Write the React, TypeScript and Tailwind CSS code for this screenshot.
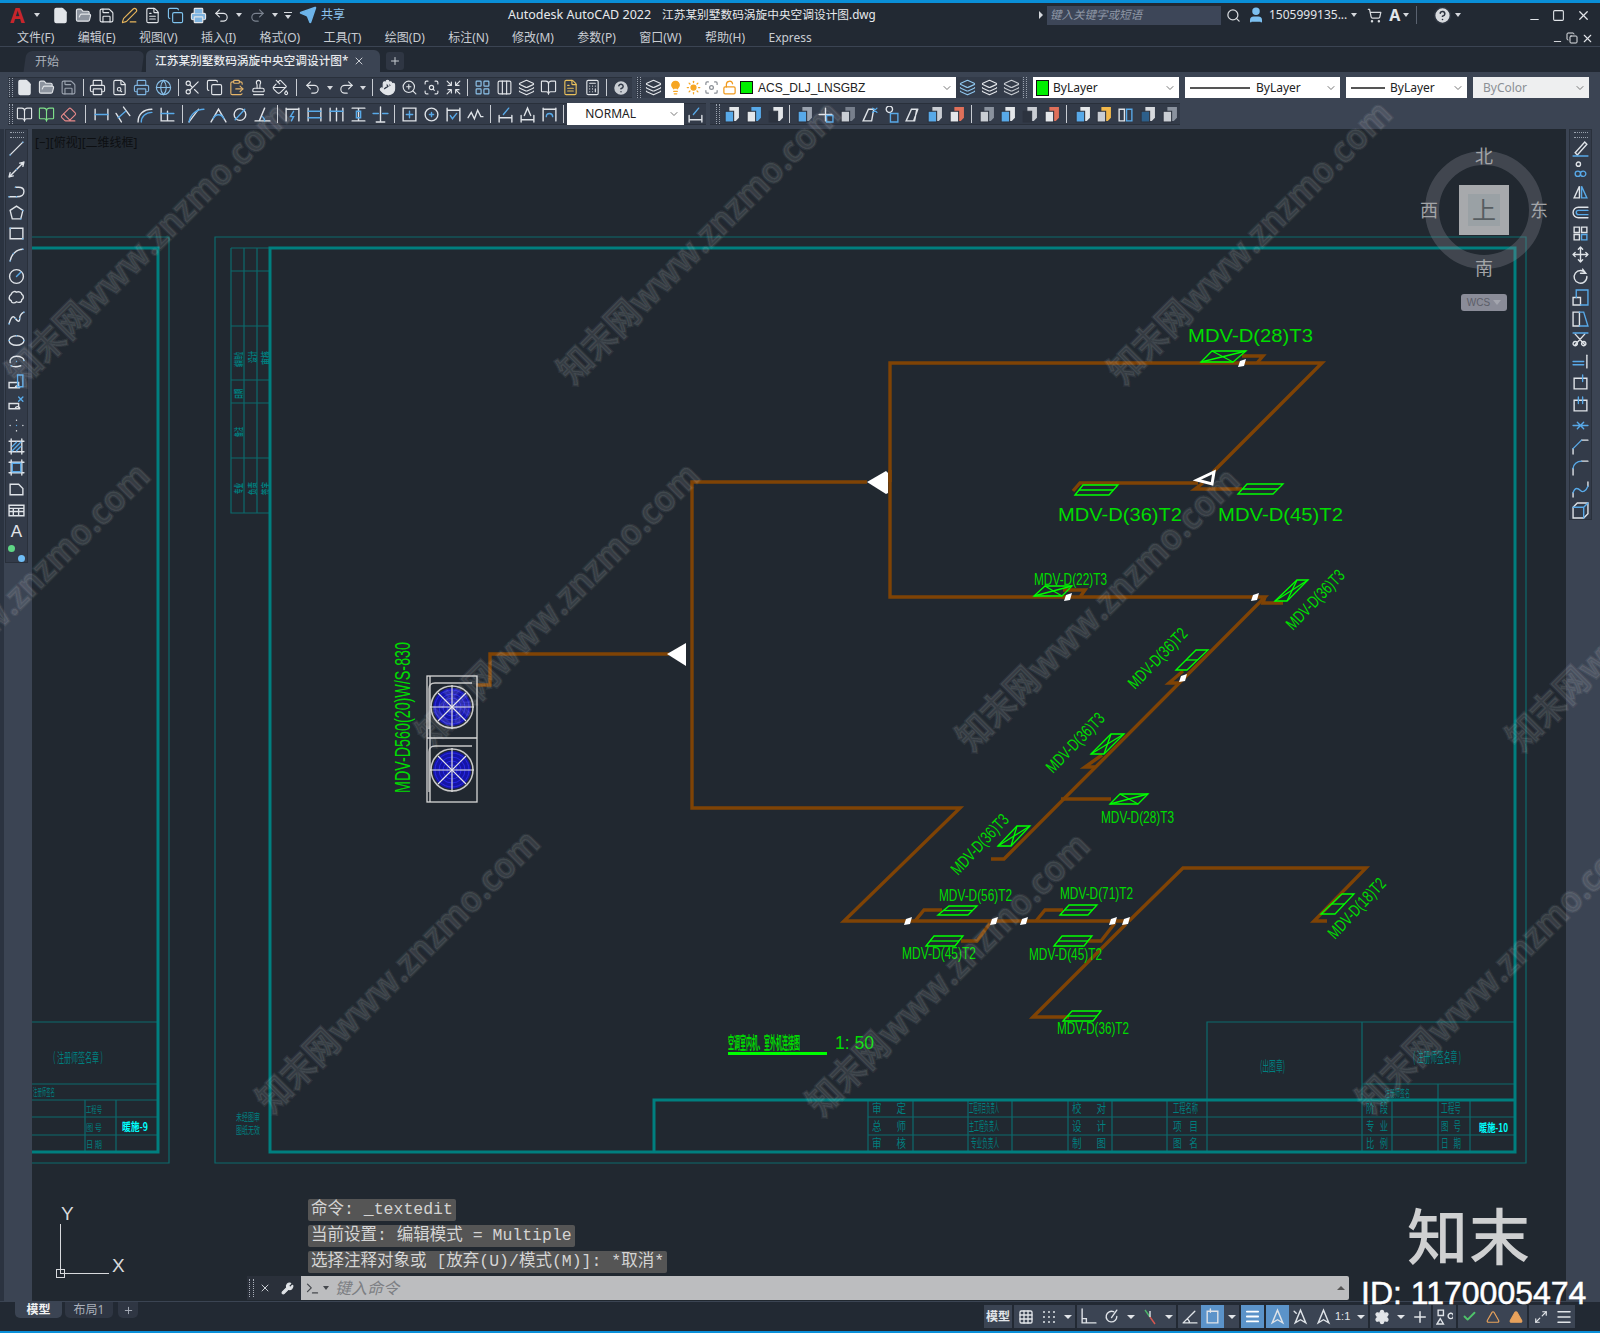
import React from 'react';
import {
  File, FolderOpen, Save, Printer, FileSearch, Globe, Scissors, Copy, ClipboardPaste, Stamp, PaintBucket,
  Undo2, Redo2, Hand, ZoomIn, ScanSearch, Shrink, Calculator, Layers, Columns3, LayoutGrid, PenLine, Lightbulb, Sun,
  Focus, LockOpen, ChevronDown, Search, User, ShoppingCart, Send, X, Minus, Square, Copy as Restore, Wrench, Terminal,
  Grid3x3, Plus, Settings, Maximize2, Menu, Check, Triangle, CircleHelp, BookOpen, Eraser, FileText,
} from 'lucide-react';

const UI = '"Noto Sans", "Noto Sans CJK SC", sans-serif';
const GREEN = '#00dc00';
const TEAL = '#007f7f';
const TEAL2 = '#0c6a6d';
const PIPE = '#7f4305';

const Caret = () => <div className="w-[12px] flex justify-center"><div className="w-0 h-0 border-x-[3px] border-x-transparent border-t-[4px] border-t-[#d5d8dd]" /></div>;
const Sep = ({ w }: { w: number }) => (
  <div className="flex justify-center h-full py-[1px]" style={{ width: w }}><div className="w-px h-full bg-[#c8ccd2]" /></div>
);
const Grip = () => <div className="w-[4px] h-full mx-[1px] border-x border-dotted border-[#9aa2ae]" />;

// small stroked toolbar glyph, white part and blue part
const Glyph = ({ d, b, size = 17 }: { d: string; b?: string; size?: number }) => (
  <svg width={size} height={size} viewBox="0 0 16 16" fill="none" strokeWidth="1.3" strokeLinecap="round">
    <path d={d} stroke="#dfe3e8" />
    {b && <path d={b} stroke="#58a9e8" />}
  </svg>
);

const Cube = ({ a = '#58a9e8', c = '#e4e7ea' }: { a?: string; c?: string }) => (
  <svg width="17" height="17" viewBox="0 0 16 16">
    <path d="M6 1h9v10l-3 3H6z" fill={c} />
    <path d="M2 5h8v10H2z" fill={a} stroke="#2c333f" />
  </svg>
);

const L = ({ I, c = '#e2e5e9', f }: { I: React.ElementType; c?: string; f?: string }) => (
  <I size={17} color={c} fill={f || 'none'} strokeWidth={1.6} />
);

const TI = ({ children }: { children: React.ReactNode }) => (
  <div className="w-[22px] h-full flex items-center justify-center">{children}</div>
);

const Drop = ({ w, children, muted }: { w: number; children?: React.ReactNode; muted?: boolean }) => (
  <div className={`h-[21px] flex items-center pr-[3px] ${muted ? 'bg-[#eeeff0] text-[#8b8f95]' : 'bg-white text-[#222]'}`} style={{ width: w }}>
    <div className="flex-1 flex items-center min-w-0">{children}</div>
    <ChevronDown size={12} color="#777" />
  </div>
);

const menus = ['文件(F)', '编辑(E)', '视图(V)', '插入(I)', '格式(O)', '工具(T)', '绘图(D)', '标注(N)', '修改(M)', '参数(P)', '窗口(W)', '帮助(H)', 'Express'];

const TitleBar = () => (
  <div className="h-[27px] flex items-center pb-[3px] relative text-[#e2e5e9] text-[12px]">
    <div className="w-[508px] flex items-center shrink-0">
      <span className="w-[31px] pl-[10px] text-[21px] leading-none font-bold text-[#c8252b]">A</span>
      <Caret />
      <div className="w-[6px]" />
      <div className="flex items-center gap-[1px]">
        <TI><L I={File} f="#e2e5e9" /></TI>
        <TI><L I={FolderOpen} f="#8d949f" /></TI>
        <TI><L I={Save} /></TI>
        <TI><L I={PenLine} c="#e8b65c" /></TI>
        <TI><L I={FileText} /></TI>
        <TI><L I={Copy} c="#7fc4ef" /></TI>
        <TI><L I={Printer} f="#7fb4e0" /></TI>
        <TI><L I={Undo2} /></TI>
        <Caret />
        <TI><L I={Redo2} c="#7b8390" /></TI>
        <Caret />
        <div className="w-[12px] flex flex-col items-center gap-[2px]"><div className="w-[8px] h-[1px] bg-[#d5d8dd]" /><Caret /></div>
        <div className="w-[3px]" />
        <Send size={18} color="#6db4ea" fill="#6db4ea" />
        <span className="ml-[3px] text-[12px] text-[#8cc3ee]">共享</span>
      </div>
    </div>
    <span className="text-[12.5px] w-[154px] shrink-0 text-[#e8eaed]">Autodesk AutoCAD 2022</span>
    <span className="text-[11.7px] w-[378px] shrink-0 text-[#e8eaed]">江苏某别墅数码涡旋中央空调设计图.dwg</span>
    <div className="w-0 h-0 border-y-[4px] border-y-transparent border-l-[4px] border-l-[#d5d8dd] mr-[4px] -ml-[1px]" />
    <div className="w-[174px] h-[19px] bg-[#3d4658] flex items-center pl-[3px] text-[11.5px] italic text-[#8e97a6]">键入关键字或短语</div>
    <div className="ml-[5px]"><Search size={15} color="#d7dade" /></div>
    <div className="ml-[6px]"><User size={18} color="#7cc0f0" fill="#7cc0f0" /></div>
    <span className="ml-[4px] text-[12px]">1505999135...</span>
    <div className="ml-[1px]"><Caret /></div>
    <div className="ml-[7px]"><ShoppingCart size={15} color="#d7dade" /></div>
    <span className="ml-[7px] text-[16px] leading-none font-bold">A</span>
    <Caret />
    <div className="ml-[4px] w-px h-[18px] bg-[#5a6270]" />
    <div className="ml-[16px]"><CircleHelp size={19} color="#2c333f" fill="#d7dade" /></div>
    <Caret />
    <div className="flex-1" />
    <div className="flex items-center gap-[11px] pr-[9px]">
      <Minus size={13} color="#e2e5e9" className="mt-[8px]" />
      <Square size={13} color="#e2e5e9" />
      <X size={15} color="#e2e5e9" />
    </div>
  </div>
);

const MenuBar = () => (
  <div className="h-[17px] flex items-center pl-[17px] gap-[23.400px] text-[12px] leading-none text-[#c9cdd3] border-b border-[#3b4453] relative">
    {menus.map((m) => <span key={m}>{m}</span>)}
    <div className="flex-1" />
    <div className="flex items-center gap-[3px] pr-[6px]">
      <Minus size={11} color="#e2e5e9" className="mt-[6px]" />
      <Restore size={12} color="#e2e5e9" />
      <X size={13} color="#e2e5e9" />
    </div>
  </div>
);

const TabBar = () => (
  <div className="h-[25px] flex items-end pl-[25px] text-[12px] text-[#aab0ba]">
    <div className="w-[118px] h-[21px] bg-[#2f3643] rounded-t-[6px] flex items-center pl-[10px] -skew-x-[8deg]">
      <span className="skew-x-[8deg]">开始</span>
    </div>
    <div className="ml-[3px] w-[234px] h-[22px] bg-[#3b4453] rounded-t-[6px] flex items-center pl-[9px] text-[#e8eaed]">
      <span className="font-medium text-[11.700px]">江苏某别墅数码涡旋中央空调设计图*</span>
      <X size={12} color="#c9cdd3" className="ml-[5px]" />
    </div>
    <div className="ml-[6px] mb-[2px] w-[18px] h-[18px] bg-[#2f3643] rounded-[3px] flex items-center justify-center"><Plus size={12} color="#c9cdd3" /></div>
  </div>
);

const Row1 = () => (
  <div className="h-[21px] flex items-center pl-[8px] text-[12px] mt-[5px]">
    <div className="h-[21px] flex items-center bg-[#333b49] border-y border-[#29303b] w-[624px] shrink-0">
      <Grip />
      <TI><L I={File} f="#e2e5e9" /></TI><TI><L I={FolderOpen} f="#8d949f" /></TI><TI><L I={Save} c="#9aa2ae" /></TI>
      <Sep w={7} />
      <TI><L I={Printer} /></TI><TI><L I={FileSearch} /></TI><TI><L I={Printer} c="#7fb4e0" /></TI><TI><L I={Globe} c="#88c0ea" /></TI>
      <Sep w={7} />
      <TI><L I={Scissors} /></TI><TI><L I={Copy} /></TI><TI><L I={ClipboardPaste} c="#e5b56a" /></TI><TI><L I={Stamp} /></TI><TI><L I={PaintBucket} /></TI>
      <Sep w={10} />
      <TI><L I={Undo2} /></TI><Caret /><TI><L I={Redo2} /></TI><Caret />
      <Sep w={7} />
      <TI><L I={Hand} f="#e2e5e9" /></TI><TI><L I={ZoomIn} /></TI><TI><L I={ScanSearch} /></TI><TI><L I={Shrink} /></TI>
      <Sep w={7} />
      <TI><L I={LayoutGrid} c="#8fc6ee" /></TI><TI><L I={Columns3} /></TI><TI><L I={Layers} /></TI><TI><L I={BookOpen} /></TI><TI><L I={FileText} c="#e8c05c" /></TI><TI><L I={Calculator} /></TI>
      <Sep w={7} />
      <TI><CircleHelp size={18} color="#333b49" fill="#c9cdd3" /></TI>
    </div>
    <div className="ml-[4px] h-[21px] w-[29px] flex items-center bg-[#333b49] shrink-0"><Grip /><TI><L I={Layers} /></TI></div>
    <Drop w={291}>
      <div className="flex items-center pl-[3px] gap-[3px]">
        <Lightbulb size={15} color="#f6a623" fill="#f6a623" />
        <Sun size={15} color="#f6a623" fill="#f6a623" />
        <Focus size={15} color="#8a8f96" />
        <LockOpen size={15} color="#f09a1e" />
        <div className="w-[13px] h-[13px] bg-[#00f000] border border-[#111]" />
        <span className="ml-[2px] text-[#222]" style={{ fontFamily: '"Liberation Sans", sans-serif' }}>ACS_DLJ_LNSGBZ</span>
      </div>
    </Drop>
    <div className="h-[21px] w-[66px] flex items-center bg-[#333b49] shrink-0">
      <TI><L I={Layers} c="#8fc6ee" /></TI><TI><L I={Layers} /></TI><TI><L I={Layers} c="#c9cdd3" /></TI>
    </div>
    <div className="h-[21px] w-[11px] flex items-center shrink-0"><Grip /></div>
    <Drop w={146}>
      <div className="w-[13px] h-[16px] ml-[3px] bg-[#00f000] border border-[#111]" />
      <span className="ml-[4px]">ByLayer</span>
    </Drop>
    <div className="w-[6px]" />
    <Drop w={155}>
      <div className="w-[60px] h-[2px] ml-[5px] bg-[#555]" />
      <span className="ml-[6px]">ByLayer</span>
    </Drop>
    <div className="w-[6px]" />
    <Drop w={121}>
      <div className="w-[34px] h-[2px] ml-[5px] bg-[#555]" />
      <span className="ml-[5px]">ByLayer</span>
    </Drop>
    <div className="w-[6px]" />
    <Drop w={116} muted><span className="ml-[10px]">ByColor</span></Drop>
  </div>
);

const dims = [
  { d: 'M2 3v10M14 3v10', b: 'M2 8h12' },
  { d: 'M1 7l5 8M8 1l6 8', b: 'M3 11l7-6' },
  { d: 'M1 15c0-7 5-12 13-12', b: 'M4 15c0-5 4-9 10-9' },
  { d: 'M2 2v12h12M8 5v9', b: 'M2 7h12' },
];
const dims2 = [
  { d: 'M1 15L10 3', b: 'M1 15C2 8 8 3 15 3' },
  { d: 'M1 15L8 3l7 12', b: 'M3 12C5 7 11 7 13 12' },
  { d: 'M13 8A5.500 5.500 0 1 1 2 8A5.500 5.500 0 1 1 13 8', b: 'M3 13L12 3' },
  { d: 'M1 14h14M5 14l5-12', b: 'M10 14c0-2-1-3-2-4' },
];
const dims3 = [
  { d: 'M2 2v12M14 2v12M2 3h12', b: 'M9 5L6 10h3l-2 4' },
  { d: 'M2 2v12M14 2v12', b: 'M2 5h12M2 11h12' },
  { d: 'M2 2v12M8 2v12M14 2v12', b: 'M2 5h12' },
  { d: 'M2 2h12M2 14h12M8 2v12', b: 'M6 5h4v6H6z' },
  { d: 'M8 1v14M4 15h8', b: 'M1 7h5M10 7h5' },
];
const dims4 = [
  { d: 'M2 2h12v12H2z', b: 'M5 8h6M8 5v6' },
  { d: 'M14 8A6 6 0 1 1 2 8A6 6 0 1 1 14 8', b: 'M6 8h4M8 6v4' },
  { d: 'M2 2v12M14 2v12M2 4h12', b: 'M5 9l2 3 4-5' },
  { d: 'M1 11l3-5 3 6 3-8 3 6h2', b: '' },
];
const dims5 = [
  { d: 'M2 15V9M14 15V9M2 11h12', b: 'M6 8l5-6' },
  { d: 'M2 15V9M14 15V9M2 13h12M5 9l3-7 3 7', b: '' },
  { d: 'M2 2v12M14 2v12M2 3h12', b: 'M5 10a3 3 0 1 1 6 0' },
];

const Row2 = () => (
  <div className="h-[22px] flex items-center pl-[8px] mt-[5px] text-[12px]">
    <div className="h-[22px] flex items-center bg-[#333b49] border-y border-[#29303b] w-[698px] shrink-0">
      <Grip />
      <TI><L I={BookOpen} /></TI><TI><L I={BookOpen} c="#7fe08a" /></TI><TI><L I={Eraser} c="#e88a8a" /></TI>
      <Sep w={11} />
      {dims.map((g, i) => <TI key={i}><Glyph d={g.d} b={g.b} /></TI>)}
      <Sep w={7} />
      {dims2.map((g, i) => <TI key={i}><Glyph d={g.d} b={g.b} /></TI>)}
      <Sep w={8} />
      {dims3.map((g, i) => <TI key={i}><Glyph d={g.d} b={g.b} /></TI>)}
      <Sep w={7} />
      {dims4.map((g, i) => <TI key={i}><Glyph d={g.d} b={g.b} /></TI>)}
      <Sep w={8} />
      {dims5.map((g, i) => <TI key={i}><Glyph d={g.d} b={g.b} /></TI>)}
      <Sep w={7} />
      <div className="h-[22px] w-[117px] bg-white flex items-center justify-between pl-[18px] pr-[4px] text-[#222]">
        <span>NORMAL</span><ChevronDown size={12} color="#777" />
      </div>
      <TI><Glyph d="M2 15V9M14 15V9M2 13h12" b="M6 8l5-6" /></TI>
    </div>
    <div className="ml-[4px] h-[22px] flex items-center bg-[#333b49] border-y border-[#29303b] w-[470px] shrink-0">
      <div className="w-[5px]" /><Grip />
      <TI><Cube /></TI><TI><Cube a="#e4e7ea" c="#58a9e8" /></TI><TI><Cube a="#2c333f" /></TI>
      <Sep w={7} />
      <TI><Cube a="#58a9e8" c="#9aa2ae" /></TI><TI><Glyph d="M2 8h12M8 2v12" b="M9 9h6v6H9z" /></TI><TI><Cube a="#c9cdd3" c="#777f8c" /></TI><TI><Glyph d="M2 14L7 3h5l-2 11z" b="M11 2l4 4M15 2l-4 4" /></TI>
      <TI><Glyph d="M3 3a3 3 0 1 1 0 .1" b="M7 7h7v8H7z" /></TI><TI><Glyph d="M2 14L7 3h5l-2 11zM9 14l4-11" /></TI><TI><Cube a="#58a9e8" c="#c9cdd3" /></TI><TI><Cube a="#e4e7ea" c="#e0705a" /></TI>
      <Sep w={8} />
      <TI><Cube a="#c9cdd3" c="#8a929e" /></TI><TI><Cube a="#58a9e8" c="#e4e7ea" /></TI><TI><Cube a="#2c333f" c="#c9cdd3" /></TI><TI><Cube a="#e4e7ea" c="#e0705a" /></TI>
      <Sep w={9} />
      <TI><Cube a="#58a9e8" c="#e4e7ea" /></TI><TI><Cube a="#c9cdd3" c="#f2b84b" /></TI><TI><Glyph d="M2 3h5v11H2z" b="M9 3h5v11H9z" /></TI><TI><Cube a="#2d5f8a" c="#d7dade" /></TI><TI><Cube a="#c9cdd3" c="#8a929e" /></TI>
    </div>
  </div>
);

const leftIcons = [
  { d: 'M2 14L14 2', b: 'M2 14v.1M14 2v.1' },
  { d: 'M1 15l14-14M1 15l4-1M1 15l1-4M15 1l-4 1M15 1l-1 4', b: 'M8 8v.1' },
  { d: 'M1 13h7c5 0 7-2 7-5s-2-4-5-4H7', b: 'M1 13v.1M8 13v.1M7 4v.1' },
  { d: 'M8 2l6 4-2 8H4L2 6z', b: 'M14 6v.1M12 14v.1' },
  { d: 'M2 3h12v10H2z', b: 'M14 13v.1M2 3v.1' },
  { d: 'M2 14C3 8 8 3 14 3', b: 'M2 14v.1M14 3v.1M5 7v.1' },
  { d: 'M14.500 8A6.500 6.500 0 1 1 1.500 8A6.500 6.500 0 1 1 14.500 8', b: 'M8 8l4-4' },
  { d: 'M3 5c1-3 4-3 5-2 2-1 5 0 5 2 2 1 2 4 0 5 0 3-3 3-5 2-2 2-5 1-5-1-3-1-2-5 0-6', b: '' },
  { d: 'M1 13C3 6 5 5 7 8s4 4 4 0 2-5 4-6', b: 'M1 13v.1M7 8v.1M11 8v.1M15 2v.1' },
  { d: 'M15 8c0 2.500-3 4.500-7 4.500S1 10.500 1 8s3-4.500 7-4.500S15 5.500 15 8', b: 'M1 8v.1M15 8v.1M8 3.500v.1' },
  { d: 'M2 9c-1-3 2-6 6-6s7 2 7 4M12 12c-3 1-7 1-9 0', b: 'M8 8v.1M15 7v.1M3 12v.1' },
  { d: 'M1 8h9v5H1zM7 13a2 2 0 1 1 4 0', b: 'M9 1h5v11H9z' },
  { d: 'M1 7h9v5H1zM7 12a2 2 0 1 1 4 0', b: 'M12 3v.1M10 1l4 4M14 1l-4 4' },
  { d: 'M8 3v.1M2 8v.1M14 8v.1M8 13v.1', b: 'M8 8v.1' },
  { d: 'M1 3h14M1 13h14M3 1v14M13 1v14', b: 'M4 12l8-8M4 8l4-4M8 12l4-4' },
  { d: 'M1 3h14M1 13h14M3 1v14M13 1v14', b: 'M4 4h8v8H4z' },
  { d: 'M2 3h8l4 4v6H2z', b: '' },
  { d: 'M1 3h14v10H1zM1 6h14M1 9h14M5 6v7M10 6v7', b: '' },
];
const rightIcons = [
  { d: 'M3 12L12 2l2 2-9 10z', b: 'M1 15h14' },
  { d: 'M8 3a2 2 0 1 1-4 0a2 2 0 1 1 4 0', b: 'M3 12a2 2 0 1 1 5 0a2 2 0 1 1-5 0M8 12a2 2 0 1 1 5 0a2 2 0 1 1-5 0' },
  { d: 'M2 14L7 3v11z', b: 'M9 14V3l5 11z' },
  { d: 'M15 3H6a5 5 0 0 0 0 10h9', b: 'M15 6H6a2 2 0 0 0 0 4h9' },
  { d: 'M2 2h5v5H2zM9 2h5v5H9zM2 9h5v5H2z', b: 'M9 9h5v5H9z' },
  { d: 'M8 1v14M1 8h14M8 1L6 3M8 1l2 2M8 15l-2-2M8 15l2-2M1 8l2-2M1 8l2 2M15 8l-2-2M15 8l-2 2', b: '' },
  { d: 'M13 5a6 6 0 1 0 1 3M10 1l3 4-5 0', b: '' },
  { d: 'M1 8h7v7H1z', b: 'M4 8V1h11v14H8' },
  { d: 'M1 2h6v13H1z', b: 'M7 2h4l4 13H7' },
  { d: 'M3 2l9 10M12 2L3 12M3 13a2 2 0 1 1 .1 0M11 13a2 2 0 1 1 .1 0', b: 'M1 1h14' },
  { d: 'M14 2v12', b: 'M1 8h10M1 11h10' },
  { d: 'M2 4h12v10H2z', b: 'M10 1v6' },
  { d: 'M2 4h12v10H2z', b: 'M6 1v6M10 1v6' },
  { d: '', b: 'M1 8h14M5 5l3 3-3 3M11 5L8 8l3 3' },
  { d: 'M1 15v-5M9 2h6', b: 'M1 10l8-8' },
  { d: 'M1 15V9M9 2h6', b: 'M1 9c0-4 4-7 8-7' },
  { d: 'M1 15v-4M15 1v4', b: 'M1 11c2-6 5-4 7-2s5 1 7-4' },
  { d: 'M5 1h10v10L11 15H1V5z', b: 'M1 5h10v10M11 5l4-4' },
];

const SideBar = ({ icons, extra }: { icons: { d: string; b: string }[]; extra?: React.ReactNode }) => (
  <div className="flex flex-col items-center bg-[#333b49] border border-[#29303b] w-[23px]">
    <div className="h-[6px] w-[14px] mt-[2px] border-y border-dotted border-[#9aa2ae]" />
    <div className="flex flex-col items-center gap-[4.300px] pt-[2px]">
      {icons.map((g, i) => <Glyph key={i} d={g.d} b={g.b} />)}
      {extra}
    </div>
  </div>
);

// drawing helpers, all in page coordinates
type Pt = [number, number];
const pts = (p: Pt[]) => p.map((q) => q.join(',')).join(' ');

const Pipe = ({ p }: { p: Pt[] }) => <polyline points={pts(p)} fill="none" stroke={PIPE} strokeWidth="3.400" strokeLinejoin="miter" />;

const Unit = ({ p, x }: { p: Pt[]; x?: boolean }) => (
  <g fill="none" stroke="#00ff00" strokeWidth="1.300">
    <polygon points={pts(p)} />
    {x ? (
      <>
        <line x1={p[0][0]} y1={p[0][1]} x2={p[2][0]} y2={p[2][1]} />
        <line x1={p[1][0]} y1={p[1][1]} x2={p[3][0]} y2={p[3][1]} />
      </>
    ) : (
      <line x1={(p[0][0] + p[1][0]) / 2} y1={(p[0][1] + p[1][1]) / 2} x2={(p[2][0] + p[3][0]) / 2} y2={(p[2][1] + p[3][1]) / 2} />
    )}
  </g>
);

const Lbl = ({ x, y, w, t, size = 17, rot = 0 }: { x: number; y: number; w: number; t: string; size?: number; rot?: number }) => (
  <text transform={`translate(${x} ${y}) rotate(${rot})`} textLength={w} lengthAdjust="spacingAndGlyphs" fontSize={size} fill={GREEN}
    style={{ fontFamily: '"Liberation Sans", sans-serif' }}>{t}</text>
);

const Tiny = ({ x, y, w, t, size = 10, c = TEAL, rot, bold }: { x: number; y: number; w?: number; t: string; size?: number; c?: string; rot?: number; bold?: boolean }) => (
  <text transform={`translate(${x} ${y})${rot ? ` rotate(${rot})` : ''}`} textLength={w} lengthAdjust={w ? 'spacingAndGlyphs' : undefined} fontSize={size} fill={c} fontWeight={bold ? 700 : 400}
    style={{ fontFamily: '"Noto Sans CJK SC", sans-serif', whiteSpace: 'pre' }}>{t}</text>
);

const Mark = ({ x, y }: { x: number; y: number }) => <polygon points={`${x - 4},${y + 4} ${x - 2},${y - 2} ${x + 4},${y - 4} ${x + 2},${y + 3}`} fill="#fff" />;

const Fan = ({ cx, cy }: { cx: number; cy: number }) => (
  <g>
    <circle cx={cx} cy={cy} r="21" fill="none" stroke="#c8c8c8" strokeWidth="1.500" />
    <circle cx={cx} cy={cy} r="19" fill="#1515a5" />
    {[5, 9, 13, 17].map((r) => <circle key={r} cx={cx} cy={cy} r={r} fill="none" stroke="#2a2ae8" strokeWidth="1" />)}
    <g stroke="#e8e8e8" strokeWidth="1.100">
      <line x1={cx - 22} y1={cy} x2={cx + 22} y2={cy} />
      <line x1={cx} y1={cy - 22} x2={cx} y2={cy + 22} />
      <line x1={cx - 14} y1={cy - 14} x2={cx + 14} y2={cy + 14} />
      <line x1={cx - 14} y1={cy + 14} x2={cx + 14} y2={cy - 14} />
    </g>
    <path d={`M${cx - 23} ${cy + 24}V${cy - 16}q0-6 6-6H${cx + 20}`} transform="translate(0 -2)" fill="none" stroke="#c8c8c8" strokeWidth="1.300" />
  </g>
);

const watermarks: Pt[] = [[22, 388], [573, 386], [1124, 386], [432, 748], [972, 753], [1522, 753], [-118, 748], [272, 1115], [822, 1118], [1372, 1115]];

const rowsY = [1117, 1135];
const sheetCols = [868, 913, 968, 1012, 1068, 1112, 1167, 1207, 1362, 1392, 1438, 1470];
const sheetText: { x: number; y: number; w: number; t: string }[] = [
  { x: 872, y: 1113, w: 34, t: '审       定' }, { x: 969, y: 1113, w: 30, t: '工程项目负责人' }, { x: 1072, y: 1113, w: 34, t: '校       对' }, { x: 1173, y: 1113, w: 25, t: '工程名称' }, { x: 1366, y: 1113, w: 22, t: '阶   段' }, { x: 1441, y: 1113, w: 20, t: '工程号' },
  { x: 872, y: 1131, w: 34, t: '总       师' }, { x: 969, y: 1131, w: 30, t: '主工程负责人' }, { x: 1072, y: 1131, w: 34, t: '设       计' }, { x: 1173, y: 1131, w: 25, t: '项    目' }, { x: 1366, y: 1131, w: 22, t: '专   业' }, { x: 1441, y: 1131, w: 20, t: '图   号' },
  { x: 872, y: 1148, w: 34, t: '审       核' }, { x: 971, y: 1148, w: 28, t: '专业负责人' }, { x: 1072, y: 1148, w: 34, t: '制       图' }, { x: 1173, y: 1148, w: 25, t: '图    名' }, { x: 1366, y: 1148, w: 22, t: '比   例' }, { x: 1441, y: 1148, w: 20, t: '日   期' },
];

const Drawing = () => (
  <svg viewBox="32 129 1534 1172" className="block w-full h-full">
    {/* sheet frames */}
    <g fill="none" stroke={TEAL2} strokeWidth="1.200">
      <path d="M32 237H169V1163H32" />
      <path d="M215 237H1526V1163H215z" />
      <path d="M231 248H270M231 248V513H270M244 248V513M257 248V513M231 271H270M231 326H270M231 380H270M231 403H270M231 458H270" />
      <path d="M1207 1100V1022H1515M1362 1022V1100M1362 1084H1515M1438 1084V1100" />
      <path d="M32 1022H158M32 1084H158M32 1100H158M32 1117H158M32 1135H158M85 1100V1152M116 1100V1152" />
      {rowsY.map((y) => <path key={y} d={`M868 ${y}H1515`} />)}
      {sheetCols.map((x) => <path key={x} d={`M${x} 1100V1152`} />)}
    </g>
    <g fill="none" stroke={TEAL} strokeWidth="3">
      <path d="M32 248H158V1152H32" />
      <path d="M270 248H1515V1152H270z" />
      <path d="M654 1152V1100H1515" />
    </g>

    <g>
      <Tiny x={242} y={367} t="编制单位" size={9} rot={-90} w={15} bold />
      <Tiny x={256} y={363} t="设计" size={9} rot={-90} w={12} bold />
      <Tiny x={269} y={365} t="审核" size={9} rot={-90} w={14} bold />
      <Tiny x={242} y={399} t="日期" size={9} rot={-90} w={10} bold />
      <Tiny x={242} y={437} t="备注" size={9} rot={-90} w={10} bold />
      <Tiny x={242} y={494} t="专业" size={9} rot={-90} w={11} bold />
      <Tiny x={256} y={495} t="负责" size={9} rot={-90} w={13} bold />
      <Tiny x={269} y={495} t="签字" size={9} rot={-90} w={13} bold />
      <Tiny x={236} y={1121} t="未经图审" size={10} w={24} />
      <Tiny x={236} y={1134} t="图纸无效" size={10} w={24} />
      <Tiny x={53} y={1062} t="( 注册师签名章 )" size={13} w={50} />
      <Tiny x={33} y={1096} t="注册师签名" size={10} w={22} />
      <Tiny x={86} y={1113} t="工程号" size={9} w={16} />
      <Tiny x={86} y={1131} t="图 号" size={9} w={16} />
      <Tiny x={86} y={1148} t="日 期" size={9} w={16} />
      <Tiny x={122} y={1131} t="暖施-9" size={11} w={26} c="#00ffff" bold />
      <Tiny x={1260} y={1071} t="(出图章)" size={14} w={25} />
      <Tiny x={1413} y={1062} t="( 注册师签名章 )" size={14} w={48} />
      <Tiny x={1385} y={1097} t="注册师签名" size={10} w={25} />
      <Tiny x={1479} y={1132} t="暖施-10" size={11} w={29} c="#00ffff" bold />
      {sheetText.map((s) => <Tiny key={s.t + s.x + s.y} x={s.x} y={s.y} w={s.w} t={s.t} size={12} />)}
    </g>

    {/* refrigerant pipes */}
    <Pipe p={[[476, 685], [490, 685], [490, 654], [669, 654]]} />
    <Pipe p={[[867, 482], [692, 482], [692, 808], [960, 808], [844, 921], [1129, 921]]} />
    <Pipe p={[[890, 482], [890, 363], [1322, 363], [1213, 472]]} />
    <Pipe p={[[890, 470], [890, 597], [1265, 597], [1004, 859], [991, 859]]} />
    <Pipe p={[[1198, 483], [1080, 483], [1073, 491]]} />
    <Pipe p={[[1203, 483], [1195, 489], [1242, 489]]} />
    <Pipe p={[[1242, 356], [1263, 356], [1257, 363]]} />
    <Pipe p={[[1063, 590], [1085, 590], [1080, 597]]} />
    <Pipe p={[[1265, 597], [1263, 603], [1283, 603]]} />
    <Pipe p={[[1061, 799], [1111, 799]]} />
    <Pipe p={[[1129, 921], [1183, 868], [1366, 868], [1314, 921], [1327, 921]]} />
    <Pipe p={[[1126, 924], [1033, 1017], [1069, 1017]]} />
    <Pipe p={[[915, 921], [924, 910], [942, 910]]} />
    <Pipe p={[[1036, 921], [1045, 910], [1063, 910]]} />
    <Pipe p={[[990, 923], [977, 941], [961, 941]]} />
    <Pipe p={[[1115, 923], [1101, 941], [1088, 941]]} />
    <Pipe p={[[1183, 671], [1169, 683], [1180, 683]]} />
    <Pipe p={[[1102, 755], [1085, 767], [1095, 767]]} />

    <polygon points="867,482 886,471 888,473 888,493 886,494" fill="#fff" />
    <polygon points="667,654 686,643 686,666" fill="#fff" />
    <polygon points="1197,480 1214,472 1212,484" fill="none" stroke="#fff" strokeWidth="3" />
    {([[908, 921], [994, 921], [1024, 921], [1113, 921], [1126, 921], [1242, 363], [1068, 597], [1255, 597], [1183, 678]] as Pt[]).map(([x, y]) => <Mark key={x + '-' + y} x={x} y={y} />)}

    {/* outdoor unit */}
    <g fill="none" stroke="#d8d8d8" strokeWidth="1.300">
      <rect x="427" y="676" width="50" height="126" />
      <path d="M430 676V802M427 738H477" />
    </g>
    <Fan cx={452} cy={707} />
    <Fan cx={452} cy={770} />
    <Lbl x={410} y={793} w={151} t="MDV-D560(20)W/S-830" size={22} rot={-90} />

    {/* indoor units */}
    <Unit x p={[[1201, 362], [1212, 351], [1246, 351], [1233, 362]]} />
    <Unit p={[[1075, 495], [1083, 485], [1118, 485], [1109, 495]]} />
    <Unit p={[[1238, 494], [1247, 484], [1283, 484], [1273, 494]]} />
    <Unit x p={[[1034, 596], [1045, 586], [1072, 586], [1062, 596]]} />
    <Unit x p={[[1275, 601], [1297, 580], [1308, 580], [1287, 601]]} />
    <Unit p={[[1176, 670], [1196, 650], [1208, 650], [1187, 670]]} />
    <Unit x p={[[1091, 754], [1111, 734], [1124, 734], [1104, 754]]} />
    <Unit x p={[[1110, 804], [1120, 794], [1148, 794], [1138, 804]]} />
    <Unit x p={[[998, 846], [1017, 826], [1030, 826], [1011, 846]]} />
    <Unit p={[[938, 915], [949, 906], [977, 906], [968, 915]]} />
    <Unit p={[[1060, 915], [1069, 905], [1097, 905], [1088, 915]]} />
    <Unit p={[[926, 946], [934, 936], [963, 936], [955, 946]]} />
    <Unit p={[[1054, 946], [1062, 936], [1092, 936], [1084, 946]]} />
    <Unit p={[[1063, 1021], [1072, 1011], [1101, 1011], [1093, 1021]]} />
    <Unit p={[[1321, 914], [1342, 894], [1354, 894], [1335, 914]]} />

    <Lbl x={1188} y={342} w={125} t="MDV-D(28)T3" size={18} />
    <Lbl x={1058} y={521} w={124} t="MDV-D(36)T2" size={18} />
    <Lbl x={1218} y={521} w={125} t="MDV-D(45)T2" size={18} />
    <Lbl x={1034} y={585} w={73} t="MDV-D(22)T3" />
    <Lbl x={1293} y={631} w={76} t="MDV-D(36)T3" rot={-46} />
    <Lbl x={1135} y={690} w={77} t="MDV-D(36)T2" rot={-46} />
    <Lbl x={1053} y={774} w={76} t="MDV-D(36)T3" rot={-46} />
    <Lbl x={1101} y={823} w={73} t="MDV-D(28)T3" />
    <Lbl x={958} y={876} w={76} t="MDV-D(36)T3" rot={-47} />
    <Lbl x={939} y={901} w={73} t="MDV-D(56)T2" />
    <Lbl x={1060} y={899} w={73} t="MDV-D(71)T2" />
    <Lbl x={902} y={959} w={74} t="MDV-D(45)T2" />
    <Lbl x={1029} y={960} w={73} t="MDV-D(45)T2" />
    <Lbl x={1057} y={1034} w={72} t="MDV-D(36)T2" />
    <Lbl x={1335} y={940} w={76} t="MDV-D(18)T2" rot={-47} />

    <Tiny x={728} y={1049} w={72} t="空调室内机、室外机连接图" size={17} c={GREEN} bold />
    <rect x="728" y="1052" width="99" height="3" fill="#00ff00" />
    <Lbl x={835} y={1049} w={39} t="1: 50" size={18} />
  </svg>
);

const ViewCube = () => (
  <div className="absolute left-[1393px] top-[22px] w-[118px] h-[118px] flex items-center justify-center">
    <div className="absolute inset-0 rounded-full border-[14px] border-[#8b9097]/30" />
    <div className="relative w-[50px] h-[50px] bg-[#a7a9ac] p-[9px] flex items-center justify-center">
      <div className="w-full h-full bg-[#9aa1a5] flex items-center justify-center text-[24px] leading-none text-[#565d61]">上</div>
    </div>
    <span className="absolute -top-[4px] left-0 right-0 text-center text-[18px] leading-none text-[#a3a5a8]">北</span>
    <span className="absolute -bottom-[8px] left-0 right-0 text-center text-[18px] leading-none text-[#a3a5a8]">南</span>
    <span className="absolute -left-[5px] top-[50px] text-[18px] leading-none text-[#a3a5a8]">西</span>
    <span className="absolute -right-[5px] top-[50px] text-[18px] leading-none text-[#a3a5a8]">东</span>
  </div>
);

const cmdLines = ['命令: _textedit', '当前设置: 编辑模式 = Multiple', '选择注释对象或 [放弃(U)/模式(M)]: *取消*'];

const Canvas = () => (
  <div className="relative flex-1 min-w-0 h-full overflow-hidden bg-[#212830]">
    <Drawing />
    <span className="absolute left-[3px] top-[8px] text-[12px] leading-none text-[#0d0f12]">[−][俯视][二维线框]</span>
    <ViewCube />
    <div className="absolute left-[1429px] top-[165px] w-[46px] h-[17px] rounded-[3px] bg-[#8a8c98] flex items-center justify-center gap-[3px] text-[10px] text-[#5c5e68]"
      style={{ fontFamily: '"Liberation Sans", sans-serif' }}>
      WCS
      <div className="w-0 h-0 border-x-[4px] border-x-transparent border-t-[5px] border-t-[#a3a5ae]" />
    </div>

    {/* UCS icon */}
    <div className="absolute left-[24px] top-[1074px] w-[80px] h-[78px] text-[#d8dadd] text-[19px] leading-none" style={{ fontFamily: '"Liberation Sans", sans-serif' }}>
      <span className="absolute left-[5px] top-[1px]">Y</span>
      <div className="absolute left-[4px] top-[21px] w-[1px] h-[49px] bg-[#d8dadd]" />
      <div className="absolute left-[4px] top-[70px] w-[49px] h-[1px] bg-[#d8dadd]" />
      <div className="absolute left-[0px] top-[66px] w-[9px] h-[9px] border border-[#d8dadd]" />
      <span className="absolute left-[56px] top-[53px]">X</span>
    </div>

    {/* command history + input */}
    <div className="absolute left-[276px] top-[1070px] flex flex-col items-start gap-[4px] text-[16.500px] text-[#d4d4d4]" style={{ fontFamily: '"Liberation Mono", "Noto Sans CJK SC", monospace' }}>
      {cmdLines.map((c) => (
        <div key={c} className="h-[22px] rounded-[2px] bg-[#555555] flex items-center px-[3px] whitespace-pre">{c}</div>
      ))}
    </div>
    <div className="absolute left-[215px] top-[1147px] w-[1102px] h-[24px] flex">
      <div className="w-[54px] bg-[#2a303a] flex items-center gap-[5px] pl-[2px]">
        <div className="w-[5px] h-[18px] border-x border-dotted border-[#aab0ba]" />
        <X size={12} color="#c9cdd3" />
        <Wrench size={13} color="#e2e5e9" fill="#e2e5e9" className="ml-[5px]" />
      </div>
      <div className="flex-1 bg-[#bcbdbf] rounded-r-[2px] flex items-center pl-[4px] pr-[4px] text-[16px] italic text-[#7d7f83]">
        <Terminal size={15} color="#45484d" />
        <div className="w-0 h-0 mx-[3px] border-x-[3px] border-x-transparent border-t-[4px] border-t-[#45484d]" />
        <span className="ml-[3px]">键入命令</span>
        <div className="flex-1" />
        <div className="w-0 h-0 border-x-[4px] border-x-transparent border-b-[4px] border-b-[#555]" />
      </div>
    </div>
  </div>
);

const SI = ({ children, on }: { children: React.ReactNode; on?: boolean }) => (
  <div className={`w-[23px] h-full flex items-center justify-center ${on ? 'bg-[#5b93c9]' : ''}`}>{children}</div>
);
const SC = () => <div className="w-[15px] flex justify-center"><div className="w-0 h-0 border-x-[4px] border-x-transparent border-t-[4px] border-t-[#e2e5e9]" /></div>;
const SG = ({ children }: { children: React.ReactNode }) => <div className="h-[23px] flex items-center bg-[#3b4453]">{children}</div>;

const StatusBar = () => (
  <div className="h-[30px] flex items-center border-t border-[#3b4453] text-[12px]">
    <div className="w-[984px] h-full shrink-0 flex items-start pl-[15px]">
      <div className="w-[47px] h-[16px] bg-[#3b4453] rounded-b-[5px] text-center leading-[15px] text-[#f0f1f2] font-bold">模型</div>
      <div className="ml-[3px] w-[48px] h-[16px] bg-[#2f3643] rounded-b-[5px] text-center leading-[15px] text-[#aab0ba]">布局1</div>
      <div className="ml-[5px] w-[20px] h-[16px] bg-[#2f3643] rounded-b-[5px] flex items-center justify-center"><Plus size={11} color="#aab0ba" /></div>
    </div>
    <div className="flex items-center gap-[2px]">
      <div className="w-[28px] h-[23px] bg-[#3b4453] flex items-center justify-center text-[12px] font-bold text-[#e2e5e9]">模型</div>
      <SG>
        <SI><Grid3x3 size={16} color="#e2e5e9" /></SI>
        <SI><svg width="16" height="16" viewBox="0 0 16 16" fill="none" stroke="#dfe3e8" strokeWidth="2" strokeLinecap="round"><path d="M3 3v.1M8 3v.1M13 3v.1M3 8v.1M8 8v.1M13 8v.1M3 13v.1M8 13v.1M13 13v.1" /></svg></SI>
        <SC />
      </SG>
      <SG>
        <SI><Glyph d="M2 1v13h13M2 10h4v4" /></SI>
        <SI><Glyph d="M13 8a5 5 0 1 1-3-4.500M8 9l5-7" /></SI>
        <SC />
        <SI><svg width="16" height="16" viewBox="0 0 16 16" strokeWidth="1.400"><path d="M3 1l5 7" stroke="#4cb56a" /><path d="M8 8l5 7" stroke="#d9574f" /><path d="M8 2v6" stroke="#dfe3e8" /></svg></SI>
        <SC />
      </SG>
      <SG>
        <SI><Glyph d="M2 14h13M2 14L13 3M8 14c0-2-1-3-2-4" /></SI>
        <SI on><Glyph d="M3 3h10v11H3zM6 1v3" /></SI>
        <SC />
      </SG>
      <SG><SI on><Menu size={17} color="#fff" strokeWidth={2.500} /></SI></SG>
      <SG>
        <SI on><Glyph d="M8 2L3 14l5-3 5 3z" /></SI>
        <SI><Glyph d="M8 2L3 14l5-3 5 3zM2 3l2 2" /></SI>
        <SI><Glyph d="M8 2L3 14l5-3 5 3z" /></SI>
        <span className="w-[18px] text-[11px] text-[#e2e5e9]" style={{ fontFamily: '"Liberation Sans", sans-serif' }}>1:1</span>
        <SC />
      </SG>
      <SG>
        <SI><Settings size={16} color="#e2e5e9" fill="#e2e5e9" /></SI>
        <SC />
        <SI><Plus size={18} color="#e2e5e9" /></SI>
      </SG>
      <SG><SI><Glyph d="M2 2h5v5H2zM14 5a2.500 2.500 0 1 1-.1 0M4 10l3 5H1z" /></SI></SG>
      <SG>
        <SI><Check size={15} color="#4fc46a" strokeWidth={3} /></SI>
        <SI><Triangle size={14} color="#e8a25c" /></SI>
        <SI><Triangle size={14} color="#e8a25c" fill="#e8a25c" /></SI>
      </SG>
      <SG>
        <SI><Maximize2 size={14} color="#e2e5e9" /></SI>
        <SI><Menu size={18} color="#e2e5e9" /></SI>
      </SG>
    </div>
  </div>
);

const App: React.FC = () => {
  return (
    <div className="relative w-[1600px] h-[1333px] overflow-hidden flex flex-col bg-[#222933]" style={{ fontFamily: UI }}>
      <div className="h-[3px] bg-[#0a8fd8]" />
      <TitleBar />
      <MenuBar />
      <TabBar />
      <div className="h-[57px] bg-[#3b4453]">
        <Row1 />
        <Row2 />
      </div>
      <div className="h-[1172px] flex">
        <div className="w-[4px] bg-[#2b3340]" />
        <div className="w-[28px] bg-[#3b4453] pl-[1px]">
          <SideBar icons={leftIcons} extra={
            <>
              <span className="text-[17px] leading-[17px] text-[#e2e5e9]" style={{ fontFamily: '"Liberation Sans", sans-serif' }}>A</span>
              <div className="relative w-[17px] h-[17px]">
                <div className="absolute left-0 top-0 w-[7px] h-[7px] rounded-full bg-[#5fd685]" />
                <div className="absolute right-0 bottom-0 w-[7px] h-[7px] rounded-full bg-[#6fbdf5]" />
              </div>
            </>
          } />
        </div>
        <Canvas />
        <div className="w-[34px] bg-[#3b4453] pl-[3px]">
          <SideBar icons={rightIcons} />
        </div>
      </div>
      <StatusBar />
      <div className="h-[2px] bg-[#0a8fd8]" />

      {/* site watermark lies over the whole window */}
      <svg viewBox="0 0 1600 1333" className="absolute inset-0 w-full h-full pointer-events-none">
        {watermarks.map(([x, y]) => (
          <text key={x + '-' + y} transform={`translate(${x} ${y}) rotate(-45)`} fontSize="36" fontWeight="700" textLength="382" lengthAdjust="spacingAndGlyphs"
            fill="rgba(255,255,255,0.11)" stroke="rgba(255,255,255,0.06)" strokeWidth="3"
            style={{ fontFamily: '"Open Sans", "Noto Sans CJK SC", sans-serif' }}>知末网www.znzmo.com</text>
        ))}
      </svg>
      <div className="absolute left-[1407px] top-[1192px] text-[61px] leading-[84px] font-medium tracking-[1px] text-[#cfd0d1]" style={{ fontFamily: '"Noto Sans CJK SC", sans-serif' }}>知末</div>
      <div className="absolute left-[1361px] top-[1275px] text-[32px] leading-[36px] text-white [-webkit-text-stroke:0.5px_white]" style={{ fontFamily: '"Liberation Sans", sans-serif' }}>ID: 1170005474</div>
    </div>
  );
};

export default App;
